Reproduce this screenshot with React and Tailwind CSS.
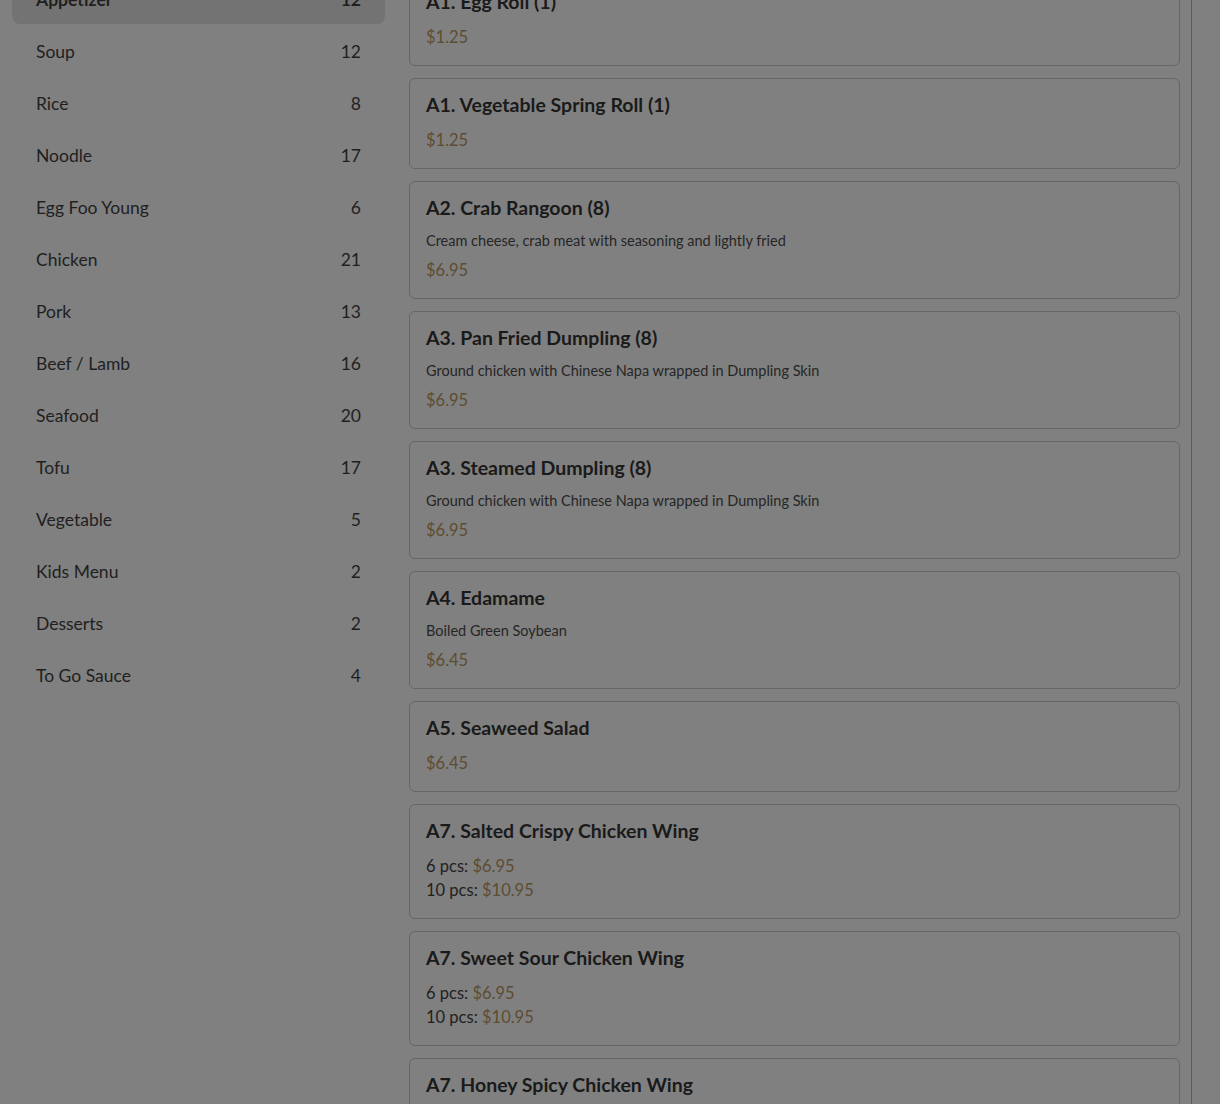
import React from "react";

const categories = [
  { name: "Appetizer", count: 12, active: true },
  { name: "Soup", count: 12 },
  { name: "Rice", count: 8 },
  { name: "Noodle", count: 17 },
  { name: "Egg Foo Young", count: 6 },
  { name: "Chicken", count: 21 },
  { name: "Pork", count: 13 },
  { name: "Beef / Lamb", count: 16 },
  { name: "Seafood", count: 20 },
  { name: "Tofu", count: 17 },
  { name: "Vegetable", count: 5 },
  { name: "Kids Menu", count: 2 },
  { name: "Desserts", count: 2 },
  { name: "To Go Sauce", count: 4 },
];

const items = [
  { title: "A1. Egg Roll (1)", price: "$1.25" },
  { title: "A1. Vegetable Spring Roll (1)", price: "$1.25" },
  { title: "A2. Crab Rangoon (8)", desc: "Cream cheese, crab meat with seasoning and lightly fried", price: "$6.95" },
  { title: "A3. Pan Fried Dumpling (8)", desc: "Ground chicken with Chinese Napa wrapped in Dumpling Skin", price: "$6.95" },
  { title: "A3. Steamed Dumpling (8)", desc: "Ground chicken with Chinese Napa wrapped in Dumpling Skin", price: "$6.95" },
  { title: "A4. Edamame", desc: "Boiled Green Soybean", price: "$6.45" },
  { title: "A5. Seaweed Salad", price: "$6.45" },
  { title: "A7. Salted Crispy Chicken Wing", sizes: [["6 pcs", "$6.95"], ["10 pcs", "$10.95"]] },
  { title: "A7. Sweet Sour Chicken Wing", sizes: [["6 pcs", "$6.95"], ["10 pcs", "$10.95"]] },
  { title: "A7. Honey Spicy Chicken Wing", sizes: [["6 pcs", "$6.95"], ["10 pcs", "$10.95"]] },
];

const MenuCard = ({ item }) => (
  <div className="border border-[#666666] rounded-md px-4 py-4">
    <h3 className="text-[19.5px] leading-[20px] font-bold text-[#1a1a1a] mb-[13px]">{item.title}</h3>
    {item.desc && (
      <p className="text-[14.5px] leading-5 text-[#262626] mb-[7px]">{item.desc}</p>
    )}
    {item.price && <p className="text-[16.5px] leading-6 text-[#5e4c31]">{item.price}</p>}
    {item.sizes &&
      item.sizes.map(([label, price]) => (
        <p key={label} className="text-[16.5px] leading-6 text-[#1f1f1f]">
          {label}: <span className="text-[#5e4c31]">{price}</span>
        </p>
      ))}
  </div>
);

export default function App() {
  return (
    <div
      className="h-[1104px] overflow-hidden bg-[#808080]"
      style={{ fontFamily: "Lato, 'Noto Sans', sans-serif" }}
    >
      <div className="flex w-[1192px] border-r border-[#5c5c5c] h-full pl-3 pr-[11px]">
        <aside className="w-[373px] shrink-0 -mt-6 flex flex-col gap-1">
          {categories.map((c) => (
            <div
              key={c.name}
              className={`h-12 flex items-center justify-between px-6 rounded-lg text-[17.5px] text-[#1f1f1f] ${
                c.active ? "bg-[#737373] font-bold" : ""
              }`}
            >
              <span>{c.name}</span>
              <span>{c.count}</span>
            </div>
          ))}
        </aside>
        <main className="flex-1 ml-6 -mt-[25px] flex flex-col gap-3">
          {items.map((it) => (
            <MenuCard key={it.title} item={it} />
          ))}
        </main>
      </div>
    </div>
  );
}
